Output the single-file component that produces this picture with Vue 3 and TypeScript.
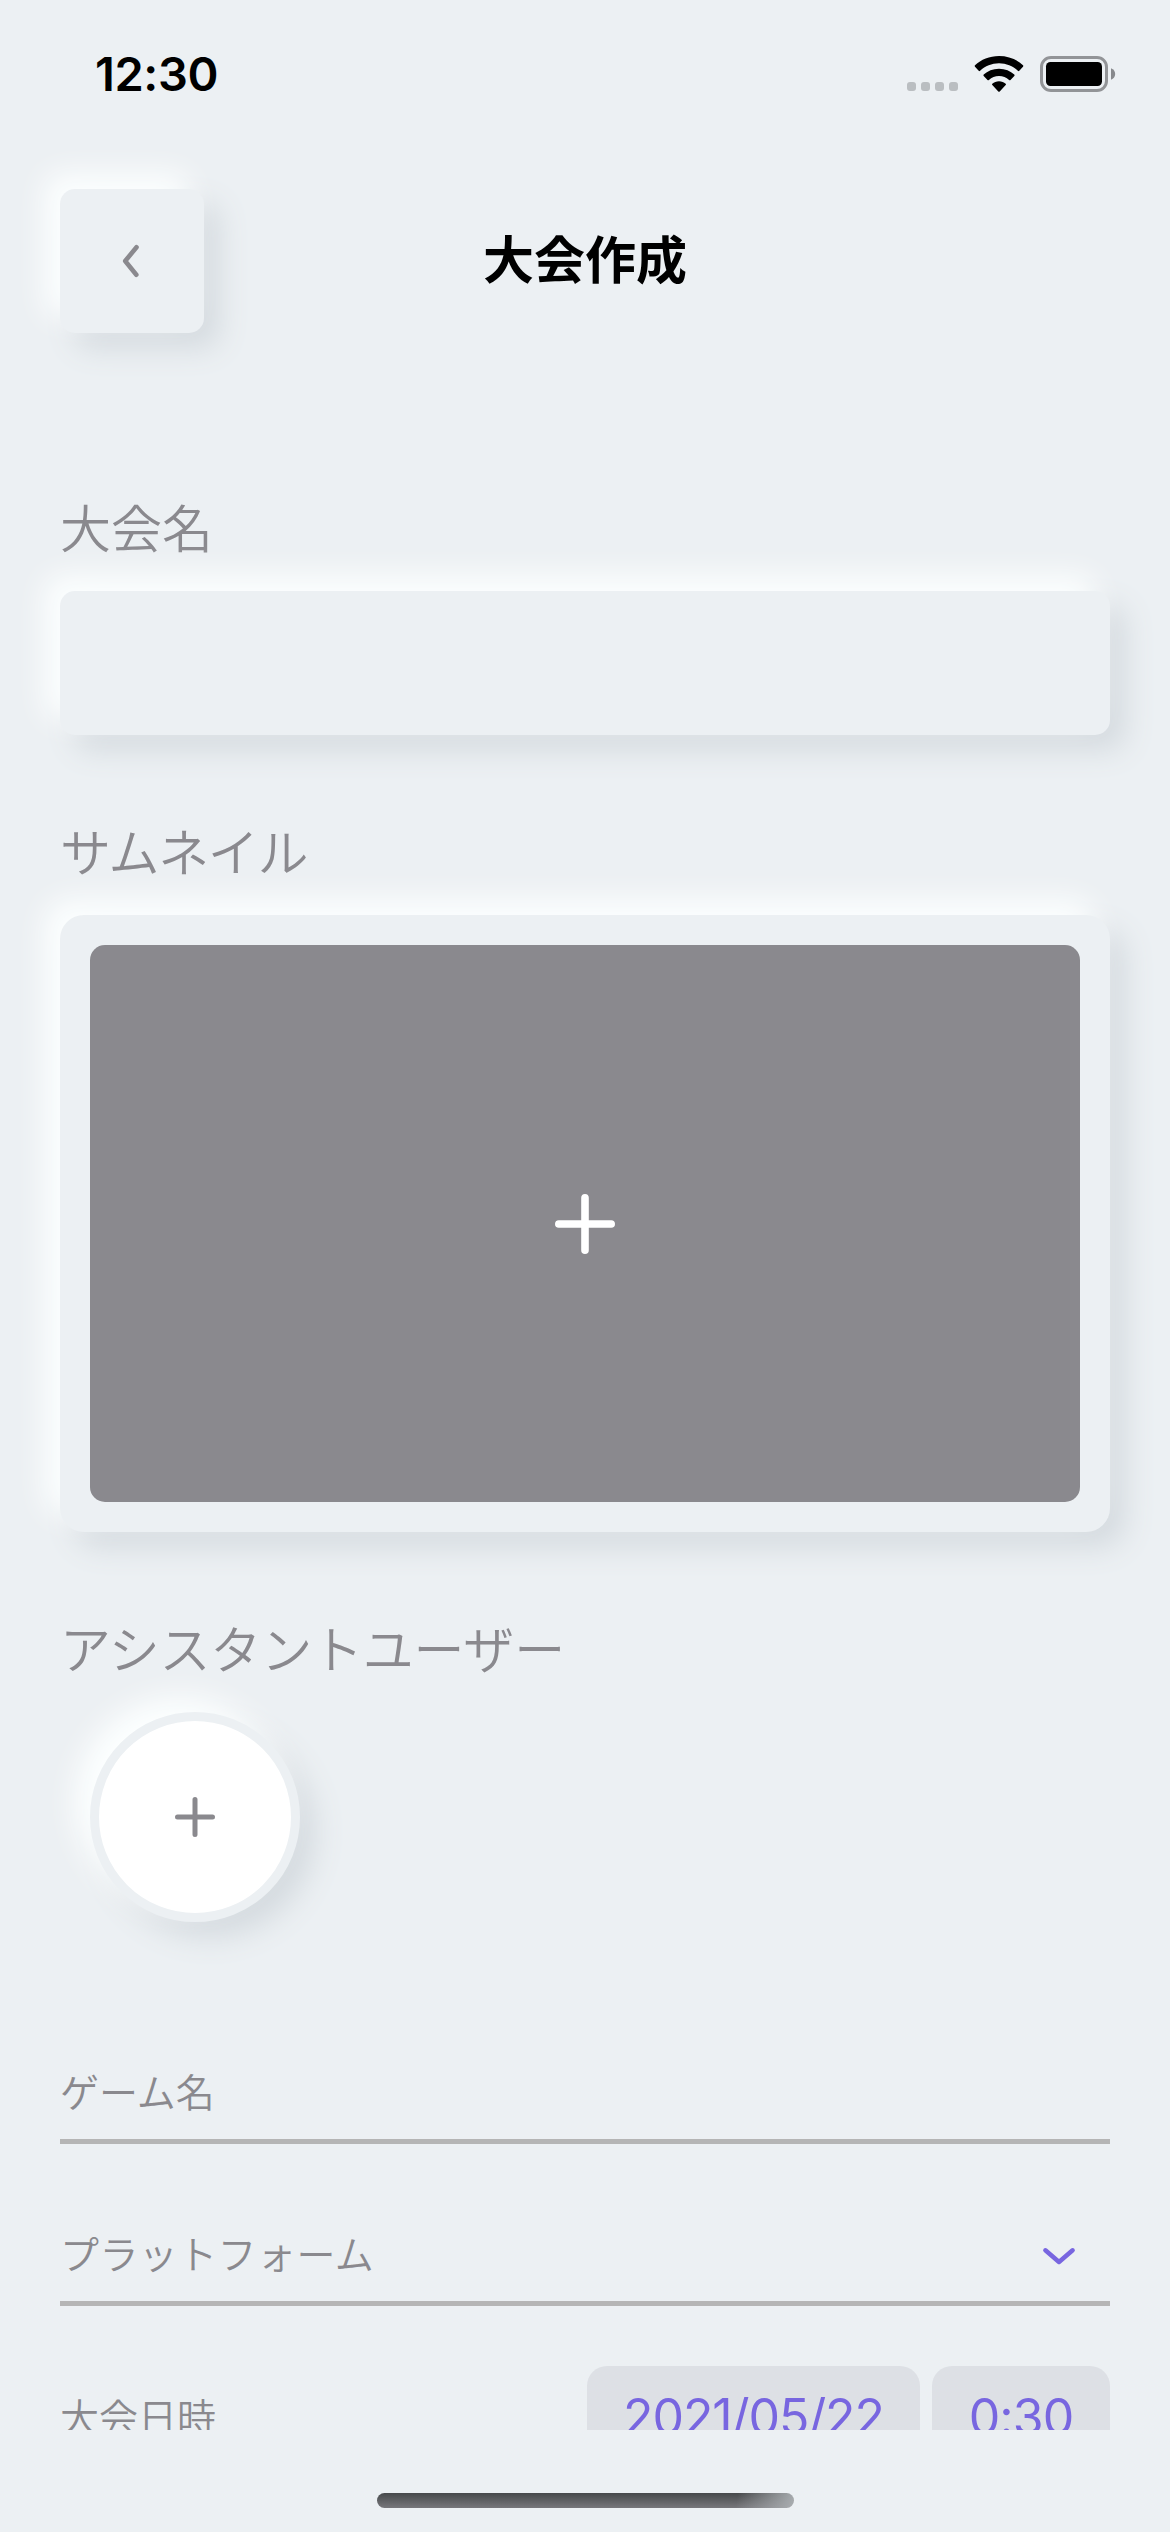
<script setup lang="ts">
import { ref } from 'vue'

const title = ref('大会作成')
const tournamentName = ref('')
const date = ref('2021/05/22')
const time = ref('0:30')
const signalDots = 4
</script>

<template>
  <div class="screen">
    <div class="status-bar">
      <span class="clock">12:30</span>
      <div class="indicators">
        <div class="signal">
          <i v-for="n in signalDots" :key="n" class="dot"></i>
        </div>
        <svg class="wifi" width="50" height="38" viewBox="0 0 50 38" aria-hidden="true">
          <path d="M25 1C34.5 1 43 4.500 49 10.300Q49.600 11 49 11.700L45.300 15.800Q44.600 16.500 43.900 15.800C38.800 11.100 32.300 8.300 25 8.300S11.200 11.100 6.100 15.800Q5.400 16.500 4.700 15.800L1 11.700Q0.400 11 1 10.300C7 4.500 15.500 1 25 1Z" />
          <path d="M25 13.700C31.200 13.700 36.400 15.900 40.300 19.500Q41 20.200 40.300 20.900L36.500 24.900Q35.800 25.600 35.100 25C32.300 22.600 28.900 21 25 21S17.700 22.600 14.900 25Q14.200 25.600 13.500 24.900L9.700 20.900Q9 20.200 9.700 19.500C13.600 15.900 18.800 13.700 25 13.700Z" />
          <path d="M25 26.300C27.600 26.300 29.900 27.200 31.700 28.700Q32.400 29.300 31.700 30L25.700 36.400Q25 37.100 24.300 36.400L18.300 30Q17.600 29.300 18.300 28.700C20.100 27.200 22.400 26.300 25 26.300Z" />
        </svg>
        <svg class="battery" width="76" height="36" viewBox="0 0 76 36" aria-hidden="true">
          <rect x="1.500" y="1.500" width="65" height="33" rx="9.500" fill="none" stroke="#929497" stroke-width="3" />
          <rect x="6" y="6" width="56" height="24" rx="4.500" fill="#000" />
          <path d="M71 12.200C73.600 13.200 75.200 15.400 75.200 18S73.600 22.800 71 23.800Z" fill="#87898c" />
        </svg>
      </div>
    </div>

    <header class="nav">
      <button class="back raised" type="button" aria-label="戻る">
        <svg width="20" height="36" viewBox="0 0 20 36" aria-hidden="true">
          <path d="M16.500 4.300L5.200 18L16.300 31.700" fill="none" stroke="#8a898e" stroke-width="4.600" stroke-linecap="round" stroke-linejoin="round" />
        </svg>
      </button>
      <h1 class="title">{{ title }}</h1>
      <span class="nav-side"></span>
    </header>

    <main class="form">
      <h2 class="label">大会名</h2>
      <div class="name-field raised">{{ tournamentName }}</div>

      <h2 class="label tight">サムネイル</h2>
      <div class="thumbnail raised">
        <div class="thumbnail-image">
          <svg width="60" height="60" viewBox="0 0 60 60" aria-hidden="true">
            <path d="M30 3.800V56.200M3.800 30H56.200" stroke="#fff" stroke-width="7.600" stroke-linecap="round" />
          </svg>
        </div>
      </div>

      <h2 class="label assistant">アシスタントユーザー</h2>
      <button class="add-user raised" type="button" aria-label="追加">
        <svg width="40" height="40" viewBox="0 0 40 40" aria-hidden="true">
          <path d="M20 2.500V37.500M2.500 20H37.500" stroke="#8a898e" stroke-width="5" stroke-linecap="round" />
        </svg>
      </button>

      <div class="row first">
        <span>ゲーム名</span>
      </div>
      <div class="row">
        <span class="platform">プラットフォーム</span>
        <svg class="chevron" width="34" height="18" viewBox="0 0 34 18" aria-hidden="true">
          <path d="M3.400 3.300L17 15L30.600 3.300" fill="none" stroke="#7866e0" stroke-width="4.500" stroke-linecap="round" stroke-linejoin="round" />
        </svg>
      </div>
      <div class="row schedule">
        <span>大会日時</span>
        <div class="pickers">
          <span class="pill date">{{ date }}</span>
          <span class="pill time">{{ time }}</span>
        </div>
      </div>
    </main>

    <footer class="bottom">
      <div class="home-indicator"></div>
    </footer>
  </div>
</template>

<style>
body {
  margin: 0;
  background: #ecf0f3;
}
</style>

<style scoped>
.screen {
  display: flex;
  flex-direction: column;
  width: 1170px;
  height: 2532px;
  overflow: hidden;
  background: #ecf0f3;
  color: #8a898e;
  font-family: "Noto Sans CJK JP", sans-serif;
}

.raised {
  background: #ecf0f3;
  box-shadow: -15px -15px 30px #fdffff, 15px 15px 30px #d4dadf;
}

.status-bar {
  box-sizing: border-box;
  display: flex;
  justify-content: space-between;
  flex: none;
  height: 189px;
  padding: 46px 54px 0 95px;
  color: #000;
}

.clock {
  height: 56px;
  font: 600 47px/56px Inter, sans-serif;
  letter-spacing: -0.4px;
}

.indicators {
  display: flex;
  align-items: flex-start;
  padding-top: 9px;
}

.signal {
  display: flex;
  gap: 5px;
  margin: 27px 16px 0 0;
}

.dot {
  width: 9px;
  height: 9px;
  border-radius: 3px;
  background: #babec1;
}

.wifi {
  margin-right: 16px;
}

.battery {
  margin-top: 1px;
}

.nav {
  display: flex;
  align-items: center;
  justify-content: space-between;
  flex: none;
  height: 144px;
  padding: 0 60px;
}

.nav-side {
  width: 144px;
}

.back {
  display: flex;
  align-items: center;
  justify-content: center;
  width: 144px;
  height: 144px;
  padding: 0 4px 0 0;
  border: 0;
  border-radius: 15px;
}

.title {
  margin: 0 0 9px;
  color: #000;
  font-size: 51px;
  font-weight: 600;
  line-height: 76px;
}

.form {
  box-sizing: border-box;
  display: flex;
  flex-direction: column;
  flex: none;
  height: 2097px;
  padding: 155px 60px 0;
  overflow: hidden;
}

.label {
  flex: none;
  height: 76px;
  margin: 0 0 27px;
  font-size: 51px;
  font-weight: 350;
  line-height: 76px;
}

.label.tight {
  letter-spacing: -1.4px;
}

.label.assistant {
  letter-spacing: -0.2px;
}

.name-field {
  flex: none;
  height: 144px;
  margin-bottom: 77px;
  border-radius: 15px;
}

.thumbnail {
  box-sizing: border-box;
  flex: none;
  height: 617px;
  margin-bottom: 77px;
  padding: 30px;
  border-radius: 24px;
}

.thumbnail-image {
  display: flex;
  align-items: center;
  justify-content: center;
  height: 557px;
  border-radius: 15px;
  background: #8a898e;
}

.add-user {
  box-sizing: border-box;
  display: flex;
  align-items: center;
  justify-content: center;
  flex: none;
  width: 210px;
  height: 210px;
  margin-left: 30px;
  padding: 0;
  border: 9px solid #ecf0f3;
  border-radius: 50%;
  background: #fff;
}

.row {
  box-sizing: border-box;
  display: flex;
  align-items: center;
  justify-content: space-between;
  flex: none;
  height: 102px;
  margin-top: 60px;
  border-bottom: 5px solid #b5b5b5;
  font-size: 39px;
  font-weight: 350;
  line-height: 57px;
}

.row.first {
  margin-top: 120px;
}

.platform {
  letter-spacing: 0.4px;
}

.chevron {
  margin: 6px 34px 0 0;
}

.schedule {
  border-bottom: 0;
}

.row.schedule > span {
  margin-bottom: 4px;
}

.pickers {
  display: flex;
  gap: 12px;
}

.pill {
  box-sizing: border-box;
  height: 102px;
  border-radius: 20px;
  background: #dde0e5;
  color: #7866e0;
  font: 400 50px/102px Inter, sans-serif;
  text-align: center;
}

.date {
  width: 333px;
  letter-spacing: -1.1px;
}

.time {
  width: 178px;
  letter-spacing: -1px;
}

.bottom {
  display: flex;
  justify-content: center;
  padding-top: 63px;
}

.home-indicator {
  width: 417px;
  height: 15px;
  border-radius: 8px;
  background:
    linear-gradient(100deg, transparent 86%, #a9adb0 100%),
    linear-gradient(#47494b, #77777b);
}
</style>
